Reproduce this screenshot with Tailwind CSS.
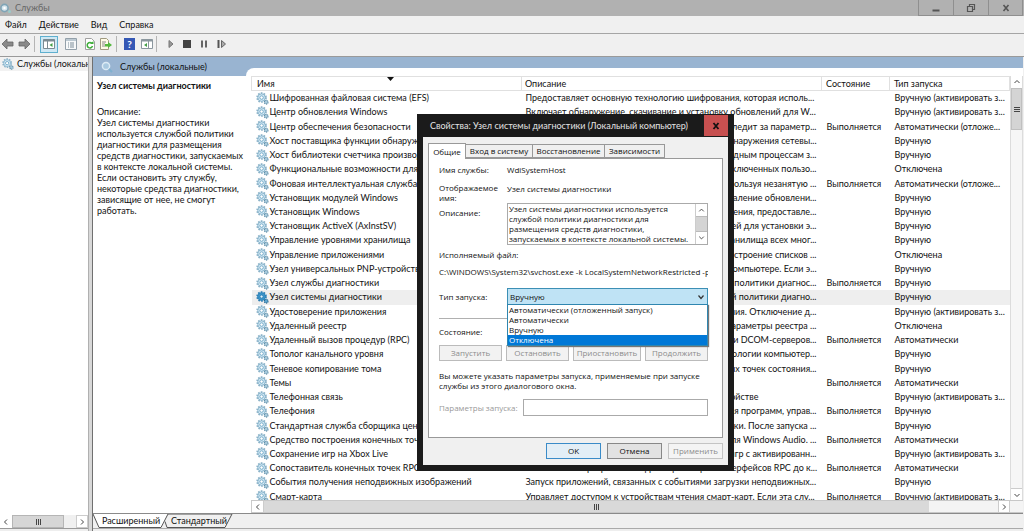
<!DOCTYPE html>
<html lang="ru">
<head>
<meta charset="utf-8">
<title>Службы</title>
<script src="https://cdn.jsdelivr.net/npm/@tailwindcss/browser@4"></script>
</head>
<body class="relative flex h-screen w-full flex-col overflow-hidden bg-[#f0f0f0] font-['Lato','Open_Sans',sans-serif] text-[9px] leading-[12px] text-[#111]">
<svg class="hidden">
  <symbol id="gear" viewBox="0 0 14 14">
    <circle cx="6" cy="6" r="4.6" fill="#cfe3ee" stroke="#8db3c8" stroke-width="2.2" stroke-dasharray="1.7 1.2"/>
    <circle cx="6" cy="6" r="3.9" fill="#d9ecf6" stroke="#7fb0cb" stroke-width=".8"/>
    <circle cx="6" cy="6" r="1.9" fill="#fff" stroke="#5f9dbf" stroke-width=".9"/>
    <circle cx="11" cy="11" r="2" fill="#a9cbdd" stroke="#5d8ca6" stroke-width="1.2" stroke-dasharray="1.2 .7"/>
  </symbol>
  <symbol id="gearsel" viewBox="0 0 14 14">
    <circle cx="6" cy="6" r="4.6" fill="#3f97cb" stroke="#2f7fb3" stroke-width="2.2" stroke-dasharray="1.7 1.2"/>
    <circle cx="6" cy="6" r="3.9" fill="#3f97cb" stroke="#2f86bd" stroke-width=".8"/>
    <circle cx="6" cy="6" r="1.7" fill="#e4f2fa" stroke="#1f76ad" stroke-width=".9"/>
    <circle cx="11" cy="11" r="2" fill="#5da6d0" stroke="#26658c" stroke-width="1.2" stroke-dasharray="1.2 .7"/>
  </symbol>
</svg>

<header class="flex h-4 shrink-0 items-center bg-[#b1b1b1] text-[#666]">
  <svg class="h-3 w-[15px]" viewBox="0 0 14 12"><circle cx="4" cy="6" r="3.6" fill="#d5e4ec" stroke="#7fa4b6" stroke-width="1.6"/><circle cx="4" cy="6" r="1.2" fill="#fff"/><circle cx="9" cy="9.500" r="1.500" fill="#9cc"/></svg>
  <h1 class="flex-1">Службы</h1>
  <div class="mr-px flex h-4 border-b border-l border-[#8f8f8f]">
    <button aria-label="Свернуть" class="flex w-[35px] items-center justify-center border-r border-[#8f8f8f]"><svg class="size-3" viewBox="0 0 12 12"><path d="M2.500 8.500h7" stroke="#555" stroke-width="2"/></svg></button>
    <button aria-label="Восстановить" class="flex w-[35px] items-center justify-center border-r border-[#8f8f8f]"><svg class="size-3" viewBox="0 0 12 12"><path d="M2.500 4.500h5v5h-5zM4.500 4V2.500h5v5H8" fill="none" stroke="#555" stroke-width="1.200"/></svg></button>
    <button aria-label="Закрыть" class="flex w-[34px] items-center justify-center border-r border-[#8f8f8f]"><svg class="size-3" viewBox="0 0 12 12"><path d="M3.500 3l5 6M8.500 3l-5 6" stroke="#555" stroke-width="1.600"/></svg></button>
  </div>
</header>

<nav class="flex h-[18px] shrink-0 items-center gap-3 border-b border-[#a5a5a5] px-[5px]">
  <button>Файл</button><button>Действие</button><button>Вид</button><button>Справка</button>
</nav>

<div class="flex h-[22px] shrink-0 items-center pb-[2px]">
  <button aria-label="Назад"><svg class="h-4 w-4" viewBox="0 0 16 16"><path d="M2 8l5-5v3h6v4H7v3z" fill="#8a8a8a" stroke="#666" stroke-width=".8"/></svg></button>
  <button aria-label="Вперед"><svg class="h-4 w-4" viewBox="0 0 16 16"><path d="M14 8L9 3v3H3v4h6v3z" fill="#8a8a8a" stroke="#666" stroke-width=".8"/></svg></button>
  <span class="ml-0.5 h-4 w-px bg-[#b5b5b5]"></span>
  <button aria-label="Дерево консоли" class="ml-[5px] flex h-[17px] w-[18px] items-center justify-center border border-[#5fb0cf] bg-[#cfe8f4]"><svg class="h-3 w-3" viewBox="0 0 12 12"><path d="M.5 1.500h11v9H.5z" fill="#fff" stroke="#7b8b93"/><path d="M.5 2.500h11" stroke="#7b8b93" stroke-width="2"/><path d="M4.500 3v8" stroke="#7b8b93"/><path d="M9.500 5v4L6.500 7z" fill="#43a047"/></svg></button>
  <button aria-label="Свойства" class="ml-[7px]"><svg class="h-3 w-3" viewBox="0 0 12 12"><path d="M.5.5h11v11H.5z" fill="#f7f9fa" stroke="#93a0aa"/><path d="M1 2h10" stroke="#a9b8c4" stroke-width="1.500"/><path d="M3 5h1M5 5h4M3 7h1M5 7h4M3 9h1M5 9h4" stroke="#7d8d99"/></svg></button>
  <button aria-label="Обновить" class="ml-[7px]"><svg class="h-3 w-3" viewBox="0 0 12 12"><path d="M1.500.5h6l3 3v8h-9z" fill="#fff" stroke="#a0a0a0"/><path d="M8 5.500A2.700 2.700 0 1 0 8.500 8" fill="none" stroke="#3fae3a" stroke-width="1.500"/><path d="M6 6h3.500V3z" fill="#3fae3a"/></svg></button>
  <button aria-label="Экспорт" class="ml-1"><svg class="h-3 w-3" viewBox="0 0 12 12"><path d="M.5.5h6l2 2v9h-8z" fill="#fffbe6" stroke="#a09a80"/><path d="M2 4h4M2 6h3M2 8h3" stroke="#8a8a8a"/><path d="M5 6h3V4l4 3-4 3V8.500H5z" fill="#54b83c"/></svg></button>
  <span class="ml-1 h-4 w-px bg-[#b5b5b5]"></span>
  <button aria-label="Справка" class="ml-[7px] flex h-3 w-[11px] items-center justify-center bg-[#3558b5] text-[10px] leading-3 font-bold text-white">?</button>
  <button aria-label="Панель действий" class="ml-[6px]"><svg class="h-3 w-3" viewBox="0 0 12 12"><path d="M.5 1.500h11v9H.5z" fill="#fff" stroke="#8b979e"/><path d="M.5 2.500h11" stroke="#8b979e" stroke-width="2"/><path d="M7.500 3v8" stroke="#8b979e"/><path d="M6 5v4L3 7z" fill="#43a047"/></svg></button>
  <span class="ml-[3px] h-4 w-px bg-[#b5b5b5]"></span>
  <button aria-label="Запустить службу" class="ml-[10px]"><svg class="h-3 w-2" viewBox="0 0 8 12"><path d="M2 2.500v7L6 6z" fill="#999" stroke="#777"/></svg></button>
  <button aria-label="Остановить службу" class="ml-[6px]"><svg class="h-3 w-3" viewBox="0 0 12 12"><path d="M2 2h8v8H2z" fill="#444"/></svg></button>
  <button aria-label="Приостановить службу" class="ml-[5px]"><svg class="h-3 w-3" viewBox="0 0 12 12"><path d="M4 2.500v7M8 2.500v7" stroke="#666" stroke-width="2"/></svg></button>
  <button aria-label="Перезапустить службу" class="ml-[6px]"><svg class="h-3 w-3" viewBox="0 0 12 12"><path d="M2.500 2v8" stroke="#555" stroke-width="2"/><path d="M5.500 2.500v7l4-3.500z" fill="#aaa" stroke="#666"/></svg></button>
</div>

<div class="flex min-h-0 flex-1 border-t border-[#9a9a9a]">
  <aside class="flex w-[89px] shrink-0 flex-col border-r border-[#b0b0b0] bg-white">
    <div class="flex h-[14px] items-center gap-[3px] overflow-hidden bg-[#f2f2f2] pl-0.5 whitespace-nowrap"><svg class="size-3 shrink-0"><use href="#gear"/></svg>Службы (локальные)</div>
    <div class="flex-1"></div>
    <div class="flex h-[13px] bg-[#f0f0f0]">
      <button aria-label="Влево" class="flex w-3 items-center justify-center bg-white"><svg class="size-2" viewBox="0 0 8 8"><path d="M5 1.500L2.500 4 5 6.500" fill="none" stroke="#444"/></svg></button>
      <div class="flex w-[52px] items-center justify-center gap-px border border-[#b5b5b5] bg-[#d6d6d6]"><i class="h-[6px] w-px bg-[#444]"></i><i class="h-[6px] w-px bg-[#444]"></i><i class="h-[6px] w-px bg-[#444]"></i></div>
      <div class="flex-1"></div>
      <button aria-label="Вправо" class="flex w-3 items-center justify-center border border-[#ccc] bg-white"><svg class="size-2" viewBox="0 0 8 8"><path d="M3 1.500L5.500 4 3 6.500" fill="none" stroke="#444"/></svg></button>
    </div>
    <div class="h-[3px] border-t border-[#999] bg-[#eee]"></div>
  </aside>
  <div class="w-[3px] shrink-0 bg-[#d8d8d8]"></div>

  <main class="mr-px flex min-w-0 flex-1 flex-col border-l border-[#707070] bg-white">
    <div class="flex h-[11px] shrink-0 bg-[#99b4d1]"></div>
    <div class="flex min-h-0 flex-1">
      <section class="flex w-[153px] shrink-0 flex-col">
        <h2 class="-mt-[11px] flex h-[19px] shrink-0 items-center gap-[7px] bg-[#99b4d1] pl-2"><svg class="size-3 shrink-0" viewBox="0 0 12 12"><circle cx="5" cy="5" r="3.600" fill="#a9c9e0" stroke="#dcebf5" stroke-width="1.500"/><path d="M8 8l3 3" stroke="#7fb0cf" stroke-width="2"/></svg>Службы (локальные)</h2>
        <div class="pt-1 pl-1 whitespace-nowrap">
          <h3 class="font-bold">Узел системы диагностики</h3>
          <p class="mt-[14px] leading-[11px]">Описание:<br>Узел системы диагностики<br>используется службой политики<br>диагностики для размещения<br>средств диагностики, запускаемых<br>в контексте локальной системы.<br>Если остановить эту службу,<br>некоторые средства диагностики,<br>зависящие от нее, не смогут<br>работать.</p>
        </div>
      </section>
      <div class="flex min-w-0 flex-1 flex-col bg-[#99b4d1]">
       <div class="flex min-h-0 flex-1 flex-col rounded-tl-lg bg-white pt-2 pl-[5px]">
        <div class="flex min-h-0 flex-1">
          <div class="min-w-0 flex-1 overflow-hidden">
            <table class="h-[428px] w-full table-fixed border-collapse whitespace-nowrap">
              <colgroup><col class="w-[270px]"><col><col class="w-[68px]"><col class="w-[120px]"></colgroup>
              <thead><tr class="h-[14px] text-left">
                <th class="relative border border-[#e0e0e0] p-0 pl-[5px] font-normal">Имя<svg class="absolute top-0 left-1/2 h-1 w-[7px]" viewBox="0 0 7 4"><path d="M0 0h7L3.500 4z" fill="#111"/></svg></th>
                <th class="border border-[#e0e0e0] p-0 pl-[3px] font-normal">Описание</th>
                <th class="border border-[#e0e0e0] p-0 pl-1 font-normal">Состояние</th>
                <th class="border border-[#e0e0e0] p-0 pl-1 font-normal">Тип запуска</th>
              </tr></thead>
              <tbody id="rows"></tbody>
            </table>
          </div>
          <div class="flex w-[13px] shrink-0 flex-col border-x border-[#dcdcdc] bg-[#f6f6f6]">
            <button aria-label="Вверх" class="flex h-3 items-center justify-center bg-white"><svg class="size-2" viewBox="0 0 8 8"><path d="M1.500 5L4 2.500 6.500 5" fill="none" stroke="#444"/></svg></button>
            <div class="flex h-[42px] flex-col items-center justify-center gap-px border border-[#c0c0c0] bg-[#d4d4d4]"><i class="h-px w-[6px] bg-[#444]"></i><i class="h-px w-[6px] bg-[#444]"></i><i class="h-px w-[6px] bg-[#444]"></i></div>
            <div class="flex-1"></div>
            <button aria-label="Вниз" class="flex h-3 items-center justify-center border-t border-[#ccc] bg-white"><svg class="size-2" viewBox="0 0 8 8"><path d="M1.500 3L4 5.500 6.500 3" fill="none" stroke="#444"/></svg></button>
          </div>
        </div>
        <div class="flex h-[13px] shrink-0 border-y border-[#c8c8c8] bg-[#f4f4f4] pr-[13px]">
          <button aria-label="Влево" class="flex w-[13px] items-center justify-center border-x border-[#ccc] bg-white"><svg class="size-2" viewBox="0 0 8 8"><path d="M5 1.500L2.500 4 5 6.500" fill="none" stroke="#444"/></svg></button>
          <div class="flex flex-1 items-center justify-center gap-px bg-[#d9d9d9]"><i class="h-[6px] w-px bg-[#444]"></i><i class="h-[6px] w-px bg-[#444]"></i><i class="h-[6px] w-px bg-[#444]"></i></div>
          <div class="w-[69px]"></div>
          <button aria-label="Вправо" class="flex w-3 items-center justify-center border-x border-[#ccc] bg-white"><svg class="size-2" viewBox="0 0 8 8"><path d="M3 1.500L5.500 4 3 6.500" fill="none" stroke="#444"/></svg></button>
        </div>
       </div>
      </div>
    </div>
    <div class="flex h-[15px] shrink-0 border-t border-[#8a8a8a] bg-[#f0f0f0]">
      <div class="relative flex">
        <svg class="absolute inset-0 h-[14px] w-[142px]" viewBox="0 0 142 14"><path d="M0 0l6 13.500h62L75 0z" fill="#fff"/><path d="M0 0l6 13.500h62L75 0H139l-7 13.500H74l-2-6" fill="none" stroke="#555"/></svg>
        <button class="relative ml-[7px] w-[62px]">Расширенный</button>
        <button class="relative ml-2 w-[58px]">Стандартный</button>
      </div>
    </div>
    <div class="h-[3px] shrink-0 border-t border-[#aaa] bg-[#eee]"></div>
  </main>
</div>

<div role="dialog" aria-labelledby="dlg-title" class="absolute top-[114px] left-[417px] flex h-[357px] w-[317px] flex-col border-[6px] border-t-0 border-[#1b1b1b] bg-[#f0f0f0]">
  <div class="flex h-[23px] shrink-0 bg-[#1b1b1b] pl-[7px] text-[#e4e4e4]">
    <h2 id="dlg-title" class="flex flex-1 items-center whitespace-nowrap">Свойства: Узел системы диагностики (Локальный компьютер)</h2>
    <button aria-label="Закрыть" class="mt-px flex h-[21px] w-6 shrink-0 items-center justify-center bg-[#c75050]"><svg class="size-3" viewBox="0 0 12 12"><path d="M3.500 3l5 6M8.500 3l-5 6" stroke="#111" stroke-width="1.800"/></svg></button>
  </div>
  <div class="flex min-h-0 flex-1 flex-col px-[5px] pt-[6px] pb-[6px] font-['Open_Sans','Noto_Sans',sans-serif] text-[8px] leading-[10px]">
    <div role="tablist" class="relative -mb-px flex h-4 items-end">
      <button role="tab" aria-selected="true" class="h-4 w-[38px] border border-b-0 border-[#999] bg-white">Общие</button>
      <button role="tab" class="mb-px h-[14px] w-[67px] border border-l-0 border-[#999] whitespace-nowrap">Вход в систему</button>
      <button role="tab" class="mb-px h-[14px] w-[72px] border border-l-0 border-[#999]">Восстановление</button>
      <button role="tab" class="mb-px h-[14px] w-[60px] border border-l-0 border-[#999]">Зависимости</button>
    </div>
    <div class="flex flex-1 flex-col border border-[#999] bg-white pt-[6px] pr-[14px] pl-[10px]">
      <div class="grid grid-cols-[68px_1fr] items-center">
        <span>Имя службы:</span><span>WdiSystemHost</span>
        <span class="mt-2">Отображаемое<br>имя:</span><span>Узел системы диагностики</span>
        <label for="desc" class="mt-[5px] self-start">Описание:</label>
        <div class="flex h-[42px] border border-[#aaa]">
          <textarea id="desc" readonly class="min-w-0 flex-1 resize-none overflow-hidden pl-px whitespace-pre">Узел системы диагностики используется
службой политики диагностики для
размещения средств диагностики,
запускаемых в контексте локальной системы.</textarea>
          <div class="flex w-3 flex-col border-l border-[#ccc]">
            <svg class="h-3 w-full" viewBox="0 0 12 12"><path d="M3.500 7.500L6 5l2.500 2.500" fill="none" stroke="#444"/></svg>
            <div class="flex-1 border-y border-[#bbb] bg-[#d4d4d4]"></div>
            <svg class="h-3 w-full" viewBox="0 0 12 12"><path d="M3.500 4.500L6 7l2.500-2.500" fill="none" stroke="#444"/></svg>
          </div>
        </div>
      </div>
      <p class="mt-[5px]">Исполняемый файл:</p>
      <p class="mt-[7px] overflow-hidden whitespace-nowrap">C:\WINDOWS\System32\svchost.exe -k LocalSystemNetworkRestricted -p</p>
      <div class="relative mt-[11px] flex items-center">
        <label for="start" class="w-[68px]">Тип запуска:</label>
        <select id="start" class="h-[17px] min-w-0 flex-1 appearance-none border border-[#3c8fb5] bg-[#bfe3f5] pl-0.5"><option>Вручную</option></select>
        <svg class="absolute right-[3px] size-2" viewBox="0 0 8 8"><path d="M1.500 2.500L4 5.500 6.500 2.500" fill="none" stroke="#333" stroke-width="1.200"/></svg>
        <ul role="listbox" class="absolute top-[16px] right-0 left-[68px] border border-[#2f86b0] bg-white shadow-[1px_1px_1px_#777]">
          <li role="option" class="px-px">Автоматически (отложенный запуск)</li>
          <li role="option" class="px-px">Автоматически</li>
          <li role="option" class="px-px">Вручную</li>
          <li role="option" aria-selected="true" class="bg-[#0078d7] px-px text-white">Отключена</li>
        </ul>
      </div>
      <hr class="mt-[13px] border-[#b0b0b0]">
      <p class="mt-[8px]">Состояние:</p>
      <div class="mt-2 flex h-4 shrink-0 justify-between text-[#8c8c8c]">
        <button disabled class="w-[63px] border border-[#bbb] bg-[#f2f2f2]">Запустить</button>
        <button disabled class="w-[63px] border border-[#bbb] bg-[#f2f2f2]">Остановить</button>
        <button disabled class="w-[68px] border border-[#bbb] bg-[#f2f2f2]">Приостановить</button>
        <button disabled class="w-[63px] border border-[#bbb] bg-[#f2f2f2]">Продолжить</button>
      </div>
      <p class="mt-[10px] whitespace-nowrap">Вы можете указать параметры запуска, применяемые при запуске<br>службы из этого диалогового окна.</p>
      <div class="mt-2 flex items-center gap-1 text-[#999]">
        <label for="params" class="w-20 whitespace-nowrap">Параметры запуска:</label>
        <input id="params" disabled class="h-[17px] min-w-0 flex-1 border border-[#aaa] bg-white">
      </div>
    </div>
    <div class="mt-[5px] flex h-4 shrink-0 justify-end gap-[6px]">
      <button class="w-[55px] border border-[#3a8bc8] bg-[#e3eef6]">OK</button>
      <button class="w-[55px] border border-[#888] bg-[#e2e2e2]">Отмена</button>
      <button disabled class="w-[55px] border border-[#c4c4c4] bg-[#f4f4f4] text-[#8c8c8c]">Применить</button>
    </div>
  </div>
</div>

<script>
const R = 'Выполняется', M = 'Вручную', T = 'Вручную (активировать з...', D = 'Автоматически (отложе...', A = 'Автоматически', O = 'Отключена';
// name, description, state, startup type, description cut at the right edge
const data = [
 ['Шифрованная файловая система (EFS)','Предоставляет основную технологию шифрования, которая исполь...','',T,0],
 ['Центр обновления Windows','Включает обнаружение, скачивание и установку обновлений для W...','',T,0],
 ['Центр обеспечения безопасности','Служба центра безопасности следит за параметр...',R,D,1],
 ['Хост поставщика функции обнаружения','Публикует поставщиков обнаружения сетевы...','',M,1],
 ['Хост библиотеки счетчика производительности','Доступ 64-разрядным процессам з...','',M,1],
 ['Функциональные возможности для','Возможности для подключенных пользо...','',O,1],
 ['Фоновая интеллектуальная служба','Передает файлы, используя незанятую ...',R,D,1],
 ['Установщик модулей Windows','Позволяет установку и удаление обновлени...','',M,1],
 ['Установщик Windows','Добавляет приложения, предоставле...','',M,1],
 ['Установщик ActiveX (AxInstSV)','Проверка учетных записей для установки э...','',M,1],
 ['Управление уровнями хранилища','Размещение в уровнях хранилища всех мног...','',M,1],
 ['Управление приложениями','Обработка запросов на построение списков ...','',O,1],
 ['Узел универсальных PNP-устройств','Размещение на этом компьютере. Если э...','',M,1],
 ['Узел службы диагностики','Используется службой политики диагнос...',R,M,1],
 ['Узел системы диагностики','Используется службой политики диагно...','',M,1],
 ['Удостоверение приложения','Проверка приложения. Отключение д...','',T,1],
 ['Удаленный реестр','Позволяет изменять параметры реестра ...','',O,1],
 ['Удаленный вызов процедур (RPC)','Диспетчер служб COM и DCOM-серверов...',R,A,1],
 ['Тополог канального уровня','Карта сети и топологии компьютер...','',M,1],
 ['Теневое копирование тома','Управляет созданием теневых точек состояния...','',M,1],
 ['Темы','Управление темами оформления.',R,A,0],
 ['Телефонная связь','Управляет состоянием телефонной связи на устройстве','',T,0],
 ['Телефония','Поддержка телефонии для программ, управ...',R,M,1],
 ['Стандартная служба сборщика центра','Служба диагностики. После запуска ...','',M,1],
 ['Средство построения конечных точек','Звуковые устройства для Windows Audio.  ...',R,A,1],
 ['Сохранение игр на Xbox Live','Синхронизация для игр с активированн...','',T,1],
 ['Сопоставитель конечных точек RPC','Обеспечивает разрешение идентификаторов интерфейсов RPC до к...',R,A,0],
 ['События получения неподвижных изображений','Запуск приложений, связанных с событиями загрузки неподвижных...','',M,0],
 ['Смарт-карта','Управляет доступом к устройствам чтения смарт-карт. Если эта слу...',R,T,0]
];
document.getElementById('rows').innerHTML = data.map(([n,d,s,t,r],i) => `<tr class="${i===14?'bg-[#eeeeee]':''}">
<td class="overflow-hidden p-0"><div class="flex h-[14px] items-center gap-px pl-1"><svg class="size-[13px] shrink-0"><use href="${i===14?'#gearsel':'#gear'}"/></svg>${n}</div></td>
<td class="${r?'overflow-hidden p-0 pr-[5px] text-right':'overflow-hidden p-0 pl-1'}">${d}</td>
<td class="p-0 pl-[5px]">${s}</td><td class="p-0 pl-[5px]">${t}</td></tr>`).join('');
</script>
</body>
</html>
